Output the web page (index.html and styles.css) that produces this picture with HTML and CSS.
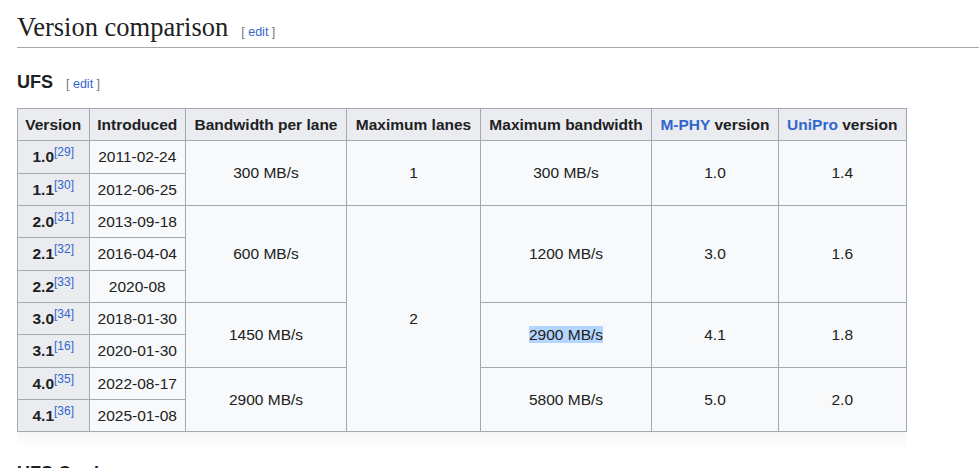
FILE: index.html
```html
<!DOCTYPE html>
<html>
<head>
<meta charset="utf-8">
<link rel="stylesheet" href="styles.css">
</head>
<body>
<div class="page">
  <h2 class="h2"><span class="h2-text">Version comparison</span><span class="editsec"><span class="br">[</span> <a class="link">edit</a> <span class="br">]</span></span></h2>
  <h3 class="h3"><span class="h3-text">UFS</span><span class="editsec"><span class="br">[</span> <a class="link">edit</a> <span class="br">]</span></span></h3>
  <table class="wikitable">
    <colgroup>
      <col class="c1"><col class="c2"><col class="c3"><col class="c4"><col class="c5"><col class="c6"><col class="c7">
    </colgroup>
    <tr class="head">
      <th>Version</th><th>Introduced</th><th>Bandwidth per lane</th><th>Maximum lanes</th><th>Maximum bandwidth</th><th><a class="link">M-PHY</a> version</th><th><a class="link">UniPro</a> version</th>
    </tr>
    <tr>
      <th class="ver">1.0<sup class="ref">[29]</sup></th><td>2011-02-24</td>
      <td rowspan="2">300 MB/s</td><td rowspan="2">1</td><td rowspan="2">300 MB/s</td><td rowspan="2">1.0</td><td rowspan="2">1.4</td>
    </tr>
    <tr><th class="ver">1.1<sup class="ref">[30]</sup></th><td>2012-06-25</td></tr>
    <tr>
      <th class="ver">2.0<sup class="ref">[31]</sup></th><td>2013-09-18</td>
      <td rowspan="3">600 MB/s</td><td rowspan="8">2</td><td rowspan="3">1200 MB/s</td><td rowspan="3">3.0</td><td rowspan="3">1.6</td>
    </tr>
    <tr><th class="ver">2.1<sup class="ref">[32]</sup></th><td>2016-04-04</td></tr>
    <tr><th class="ver">2.2<sup class="ref">[33]</sup></th><td>2020-08</td></tr>
    <tr>
      <th class="ver">3.0<sup class="ref">[34]</sup></th><td>2018-01-30</td>
      <td rowspan="2">1450 MB/s</td><td rowspan="2"><span class="sel">2900 MB/s</span></td><td rowspan="2">4.1</td><td rowspan="2">1.8</td>
    </tr>
    <tr><th class="ver">3.1<sup class="ref">[16]</sup></th><td>2020-01-30</td></tr>
    <tr>
      <th class="ver">4.0<sup class="ref">[35]</sup></th><td>2022-08-17</td>
      <td rowspan="2">2900 MB/s</td><td rowspan="2">5800 MB/s</td><td rowspan="2">5.0</td><td rowspan="2">2.0</td>
    </tr>
    <tr><th class="ver">4.1<sup class="ref">[36]</sup></th><td>2025-01-08</td></tr>
  </table>
  <div class="shadow"></div>
  <h3 class="h3 next"><span class="h3-text">UFS Card</span></h3>
</div>
</body>
</html>
```
FILE: styles.css
```css
html, body {
  margin: 0;
  padding: 0;
  background: #ffffff;
  overflow: hidden;
}
.page {
  padding: 13px 0 0 17px;
  color: #202122;
  font-family: "Liberation Sans", Arial, sans-serif;
}
.link {
  color: #3366cc;
  text-decoration: none;
}
.h2 {
  margin: 0;
  font-family: "Liberation Serif", "Times New Roman", serif;
  font-weight: normal;
  font-size: 26.5px;
  line-height: 29px;
  padding-bottom: 0;
  border-bottom: 1px solid #a2a9b1;
  display: flex;
  align-items: baseline;
}
.editsec {
  font-family: "Liberation Sans", Arial, sans-serif;
  font-size: 12.5px;
  font-weight: normal;
  margin-left: 13px;
  white-space: pre;
}
.editsec .br {
  color: #72777d;
}
.h3 {
  margin: 21px 0 0 0;
  font-size: 18px;
  font-weight: bold;
  line-height: 26px;
  display: flex;
  align-items: baseline;
}
.h3 .editsec {
  margin-left: 13px;
}
.wikitable {
  margin-top: 11px;
  border-collapse: collapse;
  table-layout: fixed;
  width: 889px;
  background: #f8f9fa;
  border: 1px solid #a2a9b1;
  font-size: 15.5px;
  color: #202122;
}
.c1 { width: 71.5px; }
.c2 { width: 96.5px; }
.c3 { width: 161px; }
.c4 { width: 134px; }
.c5 { width: 171px; }
.c6 { width: 127px; }
.c7 { width: 127.5px; }
.wikitable th,
.wikitable td {
  border: 1px solid #a2a9b1;
  padding: 5px 6px 4px;
  line-height: 22.33px;
  text-align: center;
  white-space: nowrap;
}
.wikitable th {
  background: #eaecf0;
  font-weight: bold;
}
.ref {
  font-size: 12px;
  font-weight: normal;
  line-height: 1;
  vertical-align: 6px;
  color: #3366cc;
}
.sel {
  background: #b4d5fe;
}
.shadow {
  width: 889px;
  height: 14px;
  background: linear-gradient(#f6f7f8, #fdfdfd);
}
.h3.next {
  margin-top: 14px;
}
```
